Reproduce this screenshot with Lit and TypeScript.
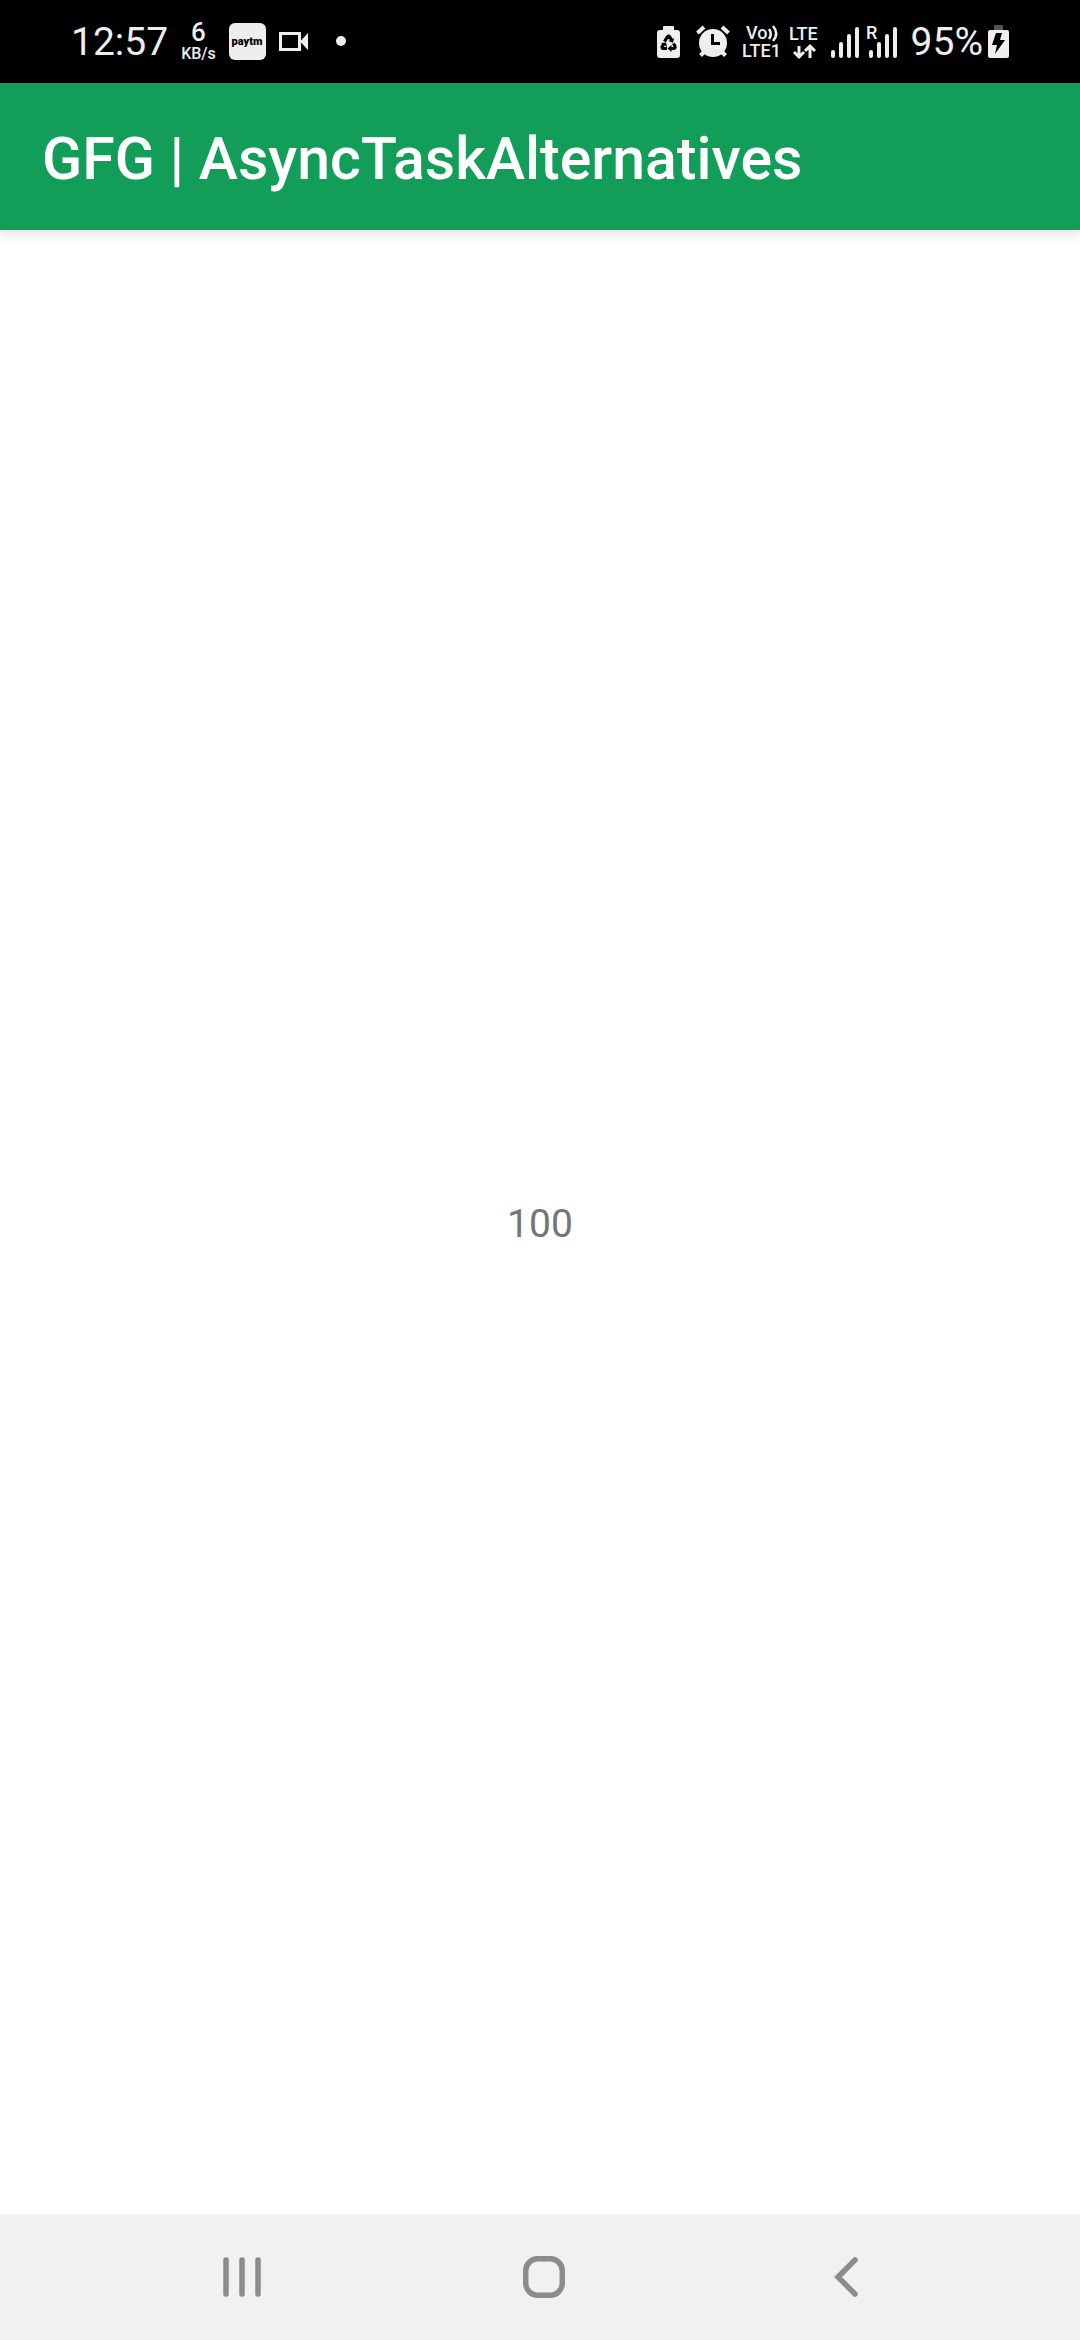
import { LitElement, html, css, svg } from "lit";
import { customElement, property } from "lit/decorators.js";

@customElement("status-bar")
class StatusBar extends LitElement {
  @property() time = "12:57";
  @property() speed = "6";
  @property() battery = "95%";

  static styles = css`
    :host {
      display: flex;
      align-items: center;
      justify-content: space-between;
      box-sizing: border-box;
      height: 83px;
      padding: 0 70px 0 71px;
      background: #000;
      color: #eee;
      font-family: Roboto, "Liberation Sans", sans-serif;
    }
    .group {
      display: flex;
      align-items: center;
    }
    .left {
      gap: 13px;
    }
    .clock,
    .percent {
      font-size: 39px;
      line-height: 48px;
    }
    .speed {
      display: flex;
      flex-direction: column;
      align-items: center;
      gap: 2px;
      font-weight: 500;
    }
    .rate {
      font-size: 26px;
      line-height: 22px;
    }
    .unit {
      font-size: 16px;
      line-height: 18px;
    }
    svg {
      display: block;
      height: 36px;
      overflow: visible;
      fill: #eee;
    }
    .line {
      fill: none;
      stroke: #eee;
    }
    .dark {
      fill: #000;
    }
    .cap {
      fill: #555;
    }
    .brand {
      font: 900 11px Roboto, "Liberation Sans", sans-serif;
      fill: #000;
    }
    .net {
      font: 500 18px Roboto, "Liberation Sans", sans-serif;
    }
    .lock {
      margin-right: 16px;
    }
    .alarm {
      margin-right: 13px;
    }
    .volte,
    .first {
      margin-right: 8px;
    }
    .data {
      margin-right: 10px;
    }
    .second {
      margin-right: 14px;
    }
    .percent {
      margin-right: 5px;
    }
  `;

  private bars(x: number) {
    return [49, 41, 33, 26].map(
      (top, i) => svg`<rect x=${x + i * 8} y=${top} width="4" height=${57 - top} rx="2" />`
    );
  }

  render() {
    return html`
      <div class="group left">
        <time class="clock">${this.time}</time>
        <div class="speed">
          <span class="rate">${this.speed}</span>
          <span class="unit">KB/s</span>
        </div>
        <svg width="37" viewBox="228 23 37 36" role="img" aria-label="Paytm">
          <rect x="228" y="22" width="37" height="37" rx="6" />
          <text class="brand" x="246" y="44" text-anchor="middle">paytm</text>
        </svg>
        <svg width="30" viewBox="279 23 30 36" aria-hidden="true">
          <rect class="line" x="280.500" y="32.500" width="19" height="16" stroke-width="3" />
          <path d="M300 40.500L308 32V49Z" />
        </svg>
        <svg width="42" viewBox="309 23 42 36" aria-hidden="true">
          <circle cx="328" cy="40" r="5" />
        </svg>
      </div>
      <div class="group">
        <svg class="lock" width="23" viewBox="657 23 23 36" aria-hidden="true">
          <path d="M663 29V26Q663 25 664 25H673Q674 25 674 26V29H677Q680 29 680 32V54Q680 57 677 57H660Q657 57 657 54V32Q657 29 660 29Z" />
          <g fill="none" stroke="#000" stroke-width="3.200">
            <path d="M664.500 40.500L667.300 36Q668.500 34.400 669.700 36L671.500 39" />
            <path d="M673.500 42.500L675 45.300Q675.500 47.400 673.500 47.500H670.500" />
            <path d="M667 47.500H663.500Q661.500 47.400 662.300 45.300L664 42.500" />
          </g>
          <path class="dark" d="M674 37L673 42L668.500 40Z M671.500 44V51L667.500 47.500Z M661 42L666 41.500L667 46Z" />
        </svg>
        <svg class="alarm" width="34" viewBox="696 23 34 36" aria-hidden="true">
          <circle cx="713" cy="42" r="14" />
          <g class="line" stroke-width="4">
            <path d="M697.500 32L704 26M722 26L728.500 32" />
            <path d="M705 50L700.500 54.500M721 50L725.500 54.500" />
          </g>
          <path class="dark" d="M711 33H714V41H720V44H711Z" />
        </svg>
        <svg class="volte" width="39" viewBox="742 23 39 36" role="img" aria-label="VoLTE 1">
          <text class="net" x="745" y="38">Vo</text>
          <text class="net" x="741" y="56">LTE1</text>
          <path class="line" stroke-width="2.500" d="M768 28Q771.500 33 768 38M772 25Q778.500 32.500 772 40" />
        </svg>
        <svg class="data" width="31" viewBox="789 23 31 36" role="img" aria-label="LTE data">
          <text class="net" x="788" y="39">LTE</text>
          <path class="line" stroke-width="3" d="M798 45V56M793 51L798 56L803 51M809 57V46M804 50L809 45L814 50" />
        </svg>
        <svg class="first" width="28" viewBox="830 23 28 36" aria-hidden="true">${this.bars(830)}</svg>
        <svg class="second" width="30" viewBox="867 23 30 36" role="img" aria-label="Roaming">
          <text class="net" x="866" y="38">R</text>
          ${this.bars(869)}
        </svg>
        <span class="percent">${this.battery}</span>
        <svg width="22" viewBox="988 23 22 36" aria-hidden="true">
          <path class="cap" d="M994 29V25Q994 24 995 24H1002Q1003 24 1003 25V29Z" />
          <rect x="988" y="29" width="21" height="28" rx="2" />
          <path class="dark" d="M996 32H1002L1000 39H1005L995 53L997 44H992Z" />
        </svg>
      </div>
    `;
  }
}

@customElement("nav-bar")
class NavBar extends LitElement {
  static styles = css`
    :host {
      display: block;
      background: #f1f1f1;
    }
    nav {
      display: flex;
      height: 126px;
      padding: 0 83px 0 91px;
    }
    button {
      flex: 1;
      display: flex;
      align-items: center;
      justify-content: center;
      padding: 0;
      border: 0;
      background: none;
    }
    svg {
      fill: none;
      stroke: #8c8c8c;
      stroke-width: 5.500;
      stroke-linecap: round;
    }
  `;

  render() {
    return html`
      <nav aria-label="System">
        <button aria-label="Recent apps">
          <svg width="38" height="42" viewBox="0 0 38 42">
            <path d="M3 4V38M19 4V38M35 4V38" />
          </svg>
        </button>
        <button aria-label="Home">
          <svg width="42" height="42" viewBox="0 0 42 42">
            <rect x="2.750" y="2.750" width="36.500" height="36.500" rx="12" />
          </svg>
        </button>
        <button aria-label="Back">
          <svg width="24" height="42" viewBox="0 0 24 42">
            <path d="M21 4L4 21L21 38" />
          </svg>
        </button>
      </nav>
    `;
  }
}

@customElement("app-root")
class AppRoot extends LitElement {
  @property({ type: Number }) progress = 100;

  static styles = css`
    :host {
      display: flex;
      flex-direction: column;
      min-height: 100vh;
      background: #fff;
      font-family: Roboto, "Liberation Sans", sans-serif;
    }
    header {
      display: flex;
      align-items: center;
      box-sizing: border-box;
      height: 147px;
      padding: 4px 42px 0;
      background: #129d58;
      box-shadow: 0 4px 12px rgba(0, 0, 0, 0.12);
    }
    h1 {
      margin: 0;
      color: #fff;
      font-size: 59px;
      font-weight: 500;
      line-height: 68px;
    }
    main {
      flex: 1;
      display: flex;
      align-items: center;
      justify-content: center;
      padding: 4px 0 0;
    }
    output {
      color: #757575;
      font-size: 39px;
      line-height: 48px;
    }
  `;

  render() {
    return html`
      <status-bar></status-bar>
      <header><h1>GFG | AsyncTaskAlternatives</h1></header>
      <main><output>${this.progress}</output></main>
      <nav-bar></nav-bar>
    `;
  }
}
